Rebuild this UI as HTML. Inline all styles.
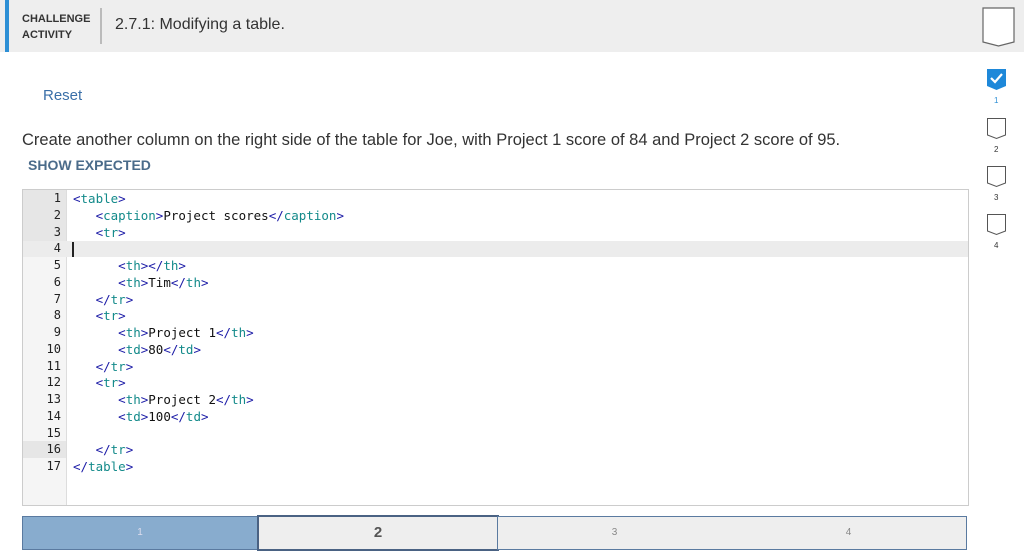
<!DOCTYPE html><html><head><style>
body{margin:0;width:1024px;height:550px;background:#fff;font-family:"Liberation Sans",sans-serif;position:relative;overflow:hidden}
.hdr{position:absolute;left:0;top:0;width:1024px;height:52px;background:#eeeeee}
.bar{position:absolute;left:5px;top:0;width:4px;height:52px;background:#2d8fd5}
.ca{position:absolute;left:22px;top:11px;font-size:11px;font-weight:bold;color:#333;line-height:16px}
.sep{position:absolute;left:100px;top:8px;width:2px;height:36px;background:#bbb}
.title{position:absolute;left:115px;top:16px;font-size:16px;color:#333}
.reset{position:absolute;left:43px;top:87px;font-size:15px;color:#3a6fa8}
.inst{position:absolute;left:22px;top:131px;font-size:16.5px;color:#333}
.show{position:absolute;left:28px;top:157px;font-size:14px;font-weight:bold;color:#4a6b8a}
.ed{position:absolute;left:22px;top:189px;width:945px;height:315px;border:1px solid #ccc;background:#fff}
.gut{position:absolute;left:0;top:0;width:43px;height:315px;background:#f5f5f5;border-right:1px solid #ddd}
.ln{position:absolute;left:0;width:38px;text-align:right;font-family:"DejaVu Sans Mono",monospace;font-size:12px;color:#222}
.cl{position:absolute;left:50px;font-family:"DejaVu Sans Mono",monospace;font-size:12.5px;color:#111;white-space:pre}
.b{color:#1a1aa6}.t{color:#138a8a}
.pb{position:absolute;top:516px;height:32px;border:1px solid #5a7aa0;font-size:10px;color:#888;text-align:center;line-height:32px}
</style></head><body>
<div class="hdr"></div><div class="bar"></div>
<div class="ca">CHALLENGE<br>ACTIVITY</div><div class="sep"></div>
<div class="title">2.7.1: Modifying a table.</div>
<svg style="position:absolute;left:982px;top:7px" width="34" height="40"><path d="M1 1H32V35L16.5 39L1 35Z" fill="#fff" stroke="#666" stroke-width="1.2"/></svg>
<svg style="position:absolute;left:987px;top:69px" width="20" height="22"><path d="M0 0H19V17L9.5 21L0 17Z" fill="#1e88d9"/><path d="M4 9L8 13L15 5" stroke="#fff" stroke-width="2.2" fill="none"/></svg>
<div style="position:absolute;left:994px;top:96px;font-size:8px;color:#2d8fd5">1</div>
<svg style="position:absolute;left:987px;top:118px" width="20" height="22"><path d="M.5 .5H18.5V17L9.5 20.5L.5 17Z" fill="#fff" stroke="#555"/></svg>
<div style="position:absolute;left:994px;top:145px;font-size:8px;color:#333">2</div>
<svg style="position:absolute;left:987px;top:166px" width="20" height="22"><path d="M.5 .5H18.5V17L9.5 20.5L.5 17Z" fill="#fff" stroke="#555"/></svg>
<div style="position:absolute;left:994px;top:193px;font-size:8px;color:#333">3</div>
<svg style="position:absolute;left:987px;top:214px" width="20" height="22"><path d="M.5 .5H18.5V17L9.5 20.5L.5 17Z" fill="#fff" stroke="#555"/></svg>
<div style="position:absolute;left:994px;top:241px;font-size:8px;color:#333">4</div>
<div class="reset">Reset</div>
<div class="inst">Create another column on the right side of the table for Joe, with Project 1 score of 84 and Project 2 score of 95.</div>
<div class="show">SHOW EXPECTED</div>
<div class="ed">
<div class="gut"></div>
<div style="position:absolute;left:0;top:0;width:43px;height:51px;background:#e6e6e6"></div>
<div style="position:absolute;left:0;top:251px;width:43px;height:17px;background:#e6e6e6"></div>
<div style="position:absolute;left:0;top:51px;width:945px;height:16px;background:#ececec"></div>
<div style="position:absolute;left:49px;top:52px;width:2px;height:15px;background:#222"></div>
<div id="c"></div>
</div>
<div class="pb" style="left:22px;width:234px;background:#88acce;color:#dde">1</div>
<div class="pb" style="left:257px;width:238px;background:#eee;border:2px solid #4a6283;top:515px;height:32px;font-size:15px;font-weight:bold;color:#555">2</div>
<div class="pb" style="left:497px;width:233px;background:#eee;border-right:1px dashed #5a7aa0">3</div>
<div class="pb" style="left:731px;width:235px;background:#eee;border-left:none">4</div>
<script>
var L=['<b>&lt;</b><t>table</t><b>&gt;</b>','   <b>&lt;</b><t>caption</t><b>&gt;</b>Project scores<b>&lt;/</b><t>caption</t><b>&gt;</b>','   <b>&lt;</b><t>tr</t><b>&gt;</b>','','      <b>&lt;</b><t>th</t><b>&gt;&lt;/</b><t>th</t><b>&gt;</b>','      <b>&lt;</b><t>th</t><b>&gt;</b>Tim<b>&lt;/</b><t>th</t><b>&gt;</b>','   <b>&lt;/</b><t>tr</t><b>&gt;</b>','   <b>&lt;</b><t>tr</t><b>&gt;</b>','      <b>&lt;</b><t>th</t><b>&gt;</b>Project 1<b>&lt;/</b><t>th</t><b>&gt;</b>','      <b>&lt;</b><t>td</t><b>&gt;</b>80<b>&lt;/</b><t>td</t><b>&gt;</b>','   <b>&lt;/</b><t>tr</t><b>&gt;</b>','   <b>&lt;</b><t>tr</t><b>&gt;</b>','      <b>&lt;</b><t>th</t><b>&gt;</b>Project 2<b>&lt;/</b><t>th</t><b>&gt;</b>','      <b>&lt;</b><t>td</t><b>&gt;</b>100<b>&lt;/</b><t>td</t><b>&gt;</b>','','   <b>&lt;/</b><t>tr</t><b>&gt;</b>','<b>&lt;/</b><t>table</t><b>&gt;</b>'];
var h='';L.forEach(function(s,i){var y=1+i*16.75;s=s.replace(/<b>/g,'<span class="b">').replace(/<\/b>/g,'</span>').replace(/<t>/g,'<span class="t">').replace(/<\/t>/g,'</span>');h+='<div class="ln" style="top:'+y+'px">'+(i+1)+'</div><div class="cl" style="top:'+y+'px">'+s+'</div>';});
document.getElementById('c').innerHTML=h;
</script>
</body></html>
